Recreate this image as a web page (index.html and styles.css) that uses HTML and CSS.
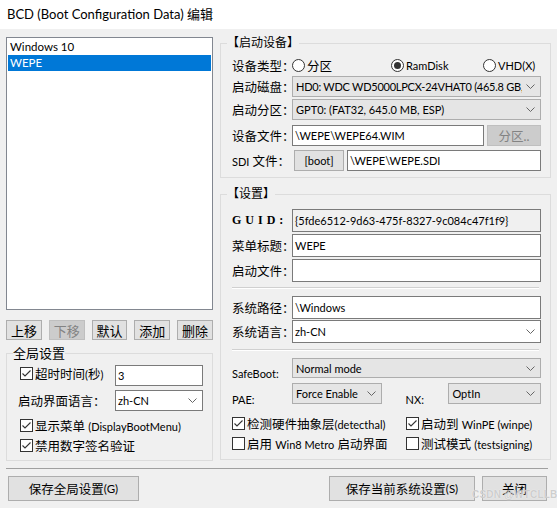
FILE: index.html
```html
<!DOCTYPE html>
<html lang="zh-CN">
<head>
<meta charset="utf-8">
<title>BCD</title>
<link rel="stylesheet" href="styles.css">
</head>
<body>
<div class="window">
  <div class="titlebar">BCD (Boot Configuration Data) 编辑</div>
  <div class="main">
    <div class="left">
      <div class="listbox">
        <div class="item">Windows 10</div>
        <div class="item sel">WEPE</div>
      </div>
      <div class="btnrow">
        <div class="btn sm">上移</div>
        <div class="btn sm dis">下移</div>
        <div class="btn sm">默认</div>
        <div class="btn sm">添加</div>
        <div class="btn sm">删除</div>
      </div>
      <fieldset class="group global">
        <legend>全局设置</legend>
        <div class="grow g-timeout">
          <div class="chk top"><svg class="box" width="13" height="13" viewBox="0 0 13 13"><rect x="0.5" y="0.5" width="12" height="12" fill="#fff" stroke="#333"/><polyline points="2.5,6.5 5,9 10.5,3.5" fill="none" stroke="#333" stroke-width="1.1"/></svg><span>超时时间<span class="l">(</span>秒<span class="l">)</span></span></div>
          <div class="input w88">3</div>
        </div>
        <div class="grow g-lang">
          <span class="glabel">启动界面语言：</span>
          <div class="combo white w88"><span class="ctext">zh-CN</span><svg class="chev" width="9" height="5" viewBox="0 0 9 5"><polyline points="0.5,0.5 4.5,4.5 8.5,0.5" fill="none" stroke="#666"/></svg></div>
        </div>
        <div class="chk crow c-menu"><svg class="box" width="13" height="13" viewBox="0 0 13 13"><rect x="0.5" y="0.5" width="12" height="12" fill="#fff" stroke="#333"/><polyline points="2.5,6.5 5,9 10.5,3.5" fill="none" stroke="#333" stroke-width="1.1"/></svg><span>显示菜单 <span class="l">(DisplayBootMenu)</span></span></div>
        <div class="chk crow"><svg class="box" width="13" height="13" viewBox="0 0 13 13"><rect x="0.5" y="0.5" width="12" height="12" fill="#fff" stroke="#333"/><polyline points="2.5,6.5 5,9 10.5,3.5" fill="none" stroke="#333" stroke-width="1.1"/></svg><span>禁用数字签名验证</span></div>
      </fieldset>
    </div>

    <div class="right">
      <fieldset class="group g1">
        <legend>【启动设备】</legend>
        <div class="frow r-type">
          <span class="flabel">设备类型：</span>
          <div class="radio rw1"><svg width="13" height="13" viewBox="0 0 13 13"><circle cx="6.5" cy="6.5" r="6" fill="#fff" stroke="#333"/></svg><span>分区</span></div>
          <div class="radio rw2"><svg width="13" height="13" viewBox="0 0 13 13"><circle cx="6.5" cy="6.5" r="6" fill="#fff" stroke="#333"/><circle cx="6.5" cy="6.5" r="3.5" fill="#333"/></svg><span class="l">RamDisk</span></div>
          <div class="radio"><svg width="13" height="13" viewBox="0 0 13 13"><circle cx="6.5" cy="6.5" r="6" fill="#fff" stroke="#333"/></svg><span class="l">VHD(X)</span></div>
        </div>
        <div class="frow r-disk">
          <span class="flabel">启动磁盘：</span>
          <div class="combo grey wfull"><span class="ctext tight">HD0: WDC WD5000LPCX-24VHAT0 (465.8 GB, SATA)</span><svg class="chev" width="9" height="5" viewBox="0 0 9 5"><polyline points="0.5,0.5 4.5,4.5 8.5,0.5" fill="none" stroke="#666"/></svg></div>
        </div>
        <div class="frow r-part">
          <span class="flabel">启动分区：</span>
          <div class="combo grey wfull"><span class="ctext">GPT0: (FAT32, 645.0 MB, ESP)</span><svg class="chev" width="9" height="5" viewBox="0 0 9 5"><polyline points="0.5,0.5 4.5,4.5 8.5,0.5" fill="none" stroke="#666"/></svg></div>
        </div>
        <div class="frow r-file">
          <span class="flabel">设备文件：</span>
          <div class="input w192">\WEPE\WEPE64.WIM</div>
          <div class="btn dis b-part">分区..</div>
        </div>
        <div class="frow r-sdi">
          <span class="flabel"><span class="l">SDI</span> 文件：</span>
          <div class="btn b-boot l">[boot]</div>
          <div class="input w194">\WEPE\WEPE.SDI</div>
        </div>
      </fieldset>

      <fieldset class="group g2">
        <legend>【设置】</legend>
        <div class="frow h23">
          <span class="flabel guid">GUID:</span>
          <div class="input ro wfull">{5fde6512-9d63-475f-8327-9c084c47f1f9}</div>
        </div>
        <div class="frow h23 mt2">
          <span class="flabel">菜单标题：</span>
          <div class="input wfull">WEPE</div>
        </div>
        <div class="frow h23 mt2">
          <span class="flabel">启动文件：</span>
          <div class="input wfull"></div>
        </div>
        <div class="hsep s1"></div>
        <div class="frow h23 mt7">
          <span class="flabel">系统路径：</span>
          <div class="input wfull">\Windows</div>
        </div>
        <div class="frow h23 mt1">
          <span class="flabel">系统语言：</span>
          <div class="combo white wfull"><span class="ctext">zh-CN</span><svg class="chev" width="9" height="5" viewBox="0 0 9 5"><polyline points="0.5,0.5 4.5,4.5 8.5,0.5" fill="none" stroke="#666"/></svg></div>
        </div>
        <div class="hsep s2"></div>
        <div class="frow lrow r-safe">
          <span class="flabel l">SafeBoot:</span>
          <div class="combo grey wfull h20"><span class="ctext">Normal mode</span><svg class="chev" width="9" height="5" viewBox="0 0 9 5"><polyline points="0.5,0.5 4.5,4.5 8.5,0.5" fill="none" stroke="#666"/></svg></div>
        </div>
        <div class="frow lrow r-pae">
          <span class="flabel l">PAE:</span>
          <div class="combo grey w90"><span class="ctext">Force Enable</span><svg class="chev" width="9" height="5" viewBox="0 0 9 5"><polyline points="0.5,0.5 4.5,4.5 8.5,0.5" fill="none" stroke="#666"/></svg></div>
          <span class="nxlabel l">NX:</span>
          <div class="combo grey w93"><span class="ctext">OptIn</span><svg class="chev" width="9" height="5" viewBox="0 0 9 5"><polyline points="0.5,0.5 4.5,4.5 8.5,0.5" fill="none" stroke="#666"/></svg></div>
        </div>
        <div class="chkgrid">
          <div class="chk"><svg class="box" width="13" height="13" viewBox="0 0 13 13"><rect x="0.5" y="0.5" width="12" height="12" fill="#fff" stroke="#333"/><polyline points="2.5,6.5 5,9 10.5,3.5" fill="none" stroke="#333" stroke-width="1.1"/></svg><span>检测硬件抽象层<span class="l">(detecthal)</span></span></div>
          <div class="chk"><svg class="box" width="13" height="13" viewBox="0 0 13 13"><rect x="0.5" y="0.5" width="12" height="12" fill="#fff" stroke="#333"/><polyline points="2.5,6.5 5,9 10.5,3.5" fill="none" stroke="#333" stroke-width="1.1"/></svg><span>启动到 <span class="l">WinPE (winpe)</span></span></div>
          <div class="chk"><svg class="box" width="13" height="13" viewBox="0 0 13 13"><rect x="0.5" y="0.5" width="12" height="12" fill="#fff" stroke="#333"/></svg><span>启用 <span class="l">Win8 Metro</span> 启动界面</span></div>
          <div class="chk"><svg class="box" width="13" height="13" viewBox="0 0 13 13"><rect x="0.5" y="0.5" width="12" height="12" fill="#fff" stroke="#333"/></svg><span>测试模式 <span class="l">(testsigning)</span></span></div>
        </div>
      </fieldset>
    </div>
  </div>
  <div class="bsep"></div>
  <div class="bottombar">
    <div class="btn bb b-saveg">保存全局设置<span class="l">(G)</span></div>
    <div class="spacer"></div>
    <div class="btn bb b-saves">保存当前系统设置<span class="l">(S)</span></div>
    <div class="btn bb b-close">关闭</div>
  </div>
  <div class="watermark">CSDN @WTCLLB</div>
</div>
</body>
</html>
```

FILE: styles.css
```css
* { box-sizing: border-box; }
html, body { margin: 0; padding: 0; }
body {
  background: #f0f0f0;
  font-family: "Lato", "Noto Sans CJK SC", sans-serif;
  font-size: 12px;
  color: #000;
}
.window {
  position: relative;
  width: 557px;
  height: 508px;
  background: #f0f0f0;
  overflow: hidden;
}
.l { font-size: 11px; }
.titlebar {
  height: 29px;
  background: #fff;
  padding-left: 7px;
  line-height: 28px;
  font-size: 13px;
  white-space: nowrap;
}
.main {
  display: flex;
  align-items: flex-start;
  padding-left: 6px;
}
.left {
  width: 207px;
  padding-top: 8px;
  display: flex;
  flex-direction: column;
}
.right {
  width: 331px;
  margin-left: 7px;
  padding-top: 6px;
  display: flex;
  flex-direction: column;
}
.listbox {
  height: 273px;
  background: #fff;
  border: 1px solid #828790;
  padding: 1px;
}
.item {
  height: 16px;
  line-height: 16px;
  padding-left: 2px;
  font-size: 11.5px;
  white-space: nowrap;
}
.item.sel { background: #0078d7; color: #fff; }

.btn {
  display: flex;
  align-items: center;
  justify-content: center;
  background: #e1e1e1;
  border: 1px solid #adadad;
  white-space: nowrap;
}
.btn.dis { background: #cccccc; border-color: #bfbfbf; color: #838383; }
.btnrow {
  display: flex;
  gap: 7px;
  margin-top: 10px;
}
.btn.sm { width: 36px; height: 20px; font-size: 13px; }

fieldset.group {
  margin: 0;
  min-width: 0;
  border: 1px solid #dcdcdc;
}
fieldset.group legend {
  padding: 0;
  line-height: 16px;
  font-size: 12px;
  white-space: nowrap;
}
.global {
  margin-top: 5px !important;
  padding: 4px 9px 5px 11px;
}
.global legend { margin-left: -5px; font-size: 13px !important; }

.grow { display: flex; justify-content: space-between; }
.g-timeout { height: 23px; align-items: flex-start; }
.g-lang { height: 21px; align-items: center; margin-top: 2px; }
.glabel { font-size: 12.5px; }
.chk { display: flex; align-items: center; gap: 2px; white-space: nowrap; }
.chk .box { flex: none; }
.chk.top { height: 16px; margin-left: 2px; }
.crow { height: 20px; margin-left: 2px; }
.chk > span { font-size: 12.5px; }
.chk > span .l { font-size: 11px; }
.c-menu { margin-top: 4px; }

.input {
  height: 21px;
  background: #fff;
  border: 1px solid #7a7a7a;
  padding: 0 2px;
  line-height: 19px;
  font-size: 11px;
  white-space: nowrap;
  overflow: hidden;
}
.input.ro { background: #f0f0f0; }
.combo {
  height: 21px;
  display: flex;
  align-items: center;
  justify-content: space-between;
  padding: 0 5px 0 3px;
  white-space: nowrap;
  overflow: hidden;
}
.combo.grey { background: #e5e5e5; border: 1px solid #adadad; }
.combo.white { background: #fff; border: 1px solid #7a7a7a; padding-left: 2px; }
.ctext { overflow: hidden; flex: 1; min-width: 0; font-size: 11px; }
.ctext.tight { letter-spacing: -0.25px; }
.chev { flex: none; margin-left: 4px; }
.w88 { width: 88px; }
.wfull { width: 249px; }
.w192 { width: 192px; }
.w194 { width: 194px; margin-left: 3px; }
.w90 { width: 90px; }
.w93 { width: 93px; }
.h20 { height: 20px; }

.g1 { padding: 4px 9px 6px 11px; }
.g1 legend, .g2 legend { margin-left: -5px; }
.frow { display: flex; align-items: center; height: 21px; }
.flabel { width: 60px; flex: none; white-space: nowrap; font-size: 12.5px; }
.flabel.l { font-size: 11px; }
.r-type { height: 21px; }
.radio { display: flex; align-items: center; gap: 2px; white-space: nowrap; font-size: 12.5px; }
.radio .l { font-size: 11px; }
.radio svg { flex: none; }
.rw1 { width: 99px; }
.rw2 { width: 92px; }
.r-part { margin-top: 2px; }
.r-file { margin-top: 5px; }
.r-sdi { margin-top: 4px; }
.b-part { width: 54px; height: 21px; margin-left: 3px; font-size: 12.5px; }
.b-boot { width: 50px; height: 21px; margin-left: 2px; }

.g2 { margin-top: 8px !important; padding: 7px 9px 6px 11px; }
.h23 { height: 23px; }
.h23 .input, .h23 .combo { height: 23px; line-height: 21px; }
.mt1 { margin-top: 1px; }
.mt2 { margin-top: 2px; }
.mt7 { margin-top: 7px; }
.guid {
  font-family: "Liberation Serif", serif;
  font-weight: bold;
  font-size: 12px;
  letter-spacing: 4px;
}
.hsep {
  height: 2px;
  width: 307px;
  border-top: 1px solid #d0d0d0;
  border-bottom: 1px solid #ffffff;
}
.s1 { margin-top: 5px; }
.s2 { margin-top: 6px; }
.lrow { align-items: flex-end; }
.lrow .flabel, .lrow .nxlabel { line-height: 14px; margin-bottom: -3px; }
.r-safe { height: 20px; margin-top: 7px; }
.r-pae { height: 21px; margin-top: 5px; }
.nxlabel { width: 43px; margin-left: 24px; white-space: nowrap; }
.chkgrid {
  display: grid;
  grid-template-columns: 174px 1fr;
  grid-auto-rows: 20px;
  margin-top: 9px;
}

.bsep {
  height: 1px;
  margin: 7px 9px 0 6px;
  background: #a0a0a0;
}
.bottombar {
  display: flex;
  padding: 7px 10px 0 8px;
}
.spacer { flex: 1; }
.btn.bb { height: 25px; font-size: 12.5px; }
.btn.bb .l { font-size: 11.5px; }
.b-saveg { width: 131px; }
.b-saves { width: 146px; }
.b-close { width: 65px; margin-left: 7px; }

.watermark {
  position: absolute;
  left: 472px;
  top: 489px;
  font-family: "Liberation Sans", sans-serif;
  font-weight: bold;
  font-size: 10px;
  letter-spacing: 0.2px;
  color: rgba(185,185,185,0.7);
  text-shadow: 0 0 1px #fff;
  white-space: nowrap;
}
```
